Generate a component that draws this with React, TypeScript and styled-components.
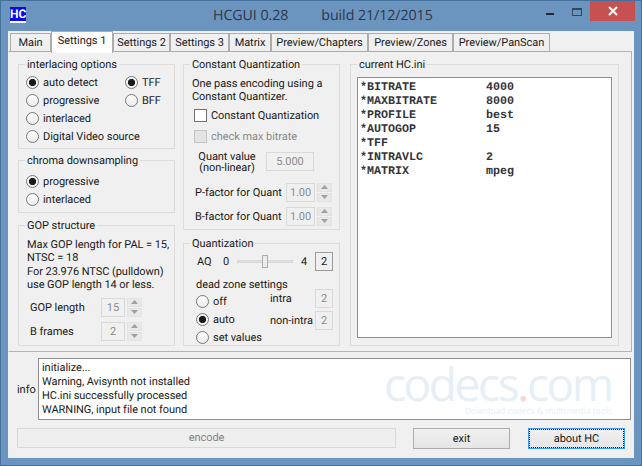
import React from 'react';
import styled, { createGlobalStyle } from 'styled-components';

const GlobalStyle = createGlobalStyle`
  html, body {
    margin: 0;
    padding: 0;
    background: #6b95bf;
  }
  * {
    box-sizing: border-box;
  }
`;

const tabs = [
  { label: 'Main', w: 41 },
  { label: 'Settings 1', w: 62, active: true },
  { label: 'Settings 2', w: 57 },
  { label: 'Settings 3', w: 59 },
  { label: 'Matrix', w: 42 },
  { label: 'Preview/Chapters', w: 97 },
  { label: 'Preview/Zones', w: 85 },
  { label: 'Preview/PanScan', w: 97 },
];

const iniLines = [
  ['*BITRATE', '4000'],
  ['*MAXBITRATE', '8000'],
  ['*PROFILE', 'best'],
  ['*AUTOGOP', '15'],
  ['*TFF', ''],
  ['*INTRAVLC', '2'],
  ['*MATRIX', 'mpeg'],
];

const logLines = [
  'initialize...',
  'Warning, Avisynth not installed',
  'HC.ini successfully processed',
  'WARNING, input file not found',
];

const Radio = ({ on, label }: { on?: boolean; label: string }) => (
  <RadioRow>
    <RadioDot $on={on} />
    {label}
  </RadioRow>
);

const Spinner = () => (
  <SpinBox>
    <SpinPart>
      <svg width="7" height="4" viewBox="0 0 7 4"><path d="M3.5 0L7 4H0z" fill="#a0a0a0" /></svg>
    </SpinPart>
    <SpinPart>
      <svg width="7" height="4" viewBox="0 0 7 4"><path d="M0 0h7L3.5 4z" fill="#a0a0a0" /></svg>
    </SpinPart>
  </SpinBox>
);

export default function App() {
  return (
    <Win>
      <GlobalStyle />
      <TitleBar>
        <AppIcon>HC</AppIcon>
        <Title>
          <span>HCGUI 0.28</span>
          <span>build 21/12/2015</span>
        </Title>
        <Controls>
          <MinBtn />
          <MaxBtn />
          <CloseBtn>
            <svg width="10" height="10" viewBox="0 0 10 10">
              <path d="M1 1l8 8M9 1l-8 8" stroke="#fff" strokeWidth="2" />
            </svg>
          </CloseBtn>
        </Controls>
      </TitleBar>
      <Client>
        <TabStrip>
          {tabs.map(t => (
            <Tab key={t.label} $w={t.w} $active={t.active}>{t.label}</Tab>
          ))}
        </TabStrip>
        <Panel>
          <Column>
            <Group $h={85}>
              <Legend>interlacing options</Legend>
              <RadioGrid>
                <Radio on label="auto detect" />
                <Radio on label="TFF" />
                <Radio label="progressive" />
                <Radio label="BFF" />
                <Radio label="interlaced" />
                <span />
                <Radio label="Digital Video source" />
              </RadioGrid>
            </Group>
            <Group $h={53} $mt={11}>
              <Legend>chroma downsampling</Legend>
              <RadioStack $top={11}>
                <Radio on label="progressive" />
                <Radio label="interlaced" />
              </RadioStack>
            </Group>
            <Group $h={121} $mt={12}>
              <Legend>GOP structure</Legend>
              <Para $top={12}>
                Max GOP length for PAL = 15,<br />
                NTSC = 18<br />
                For 23.976 NTSC (pulldown)<br />
                use GOP length 14 or less.
              </Para>
              <FieldRow $mt={6} $pl={11}>
                <FieldLabel $w={71}>GOP length</FieldLabel>
                <Field $w={24}>15</Field>
                <Spinner />
              </FieldRow>
              <FieldRow $mt={5} $pl={11}>
                <FieldLabel $w={71}>B frames</FieldLabel>
                <Field $w={24}>2</Field>
                <Spinner />
              </FieldRow>
            </Group>
          </Column>
          <Column>
            <Group $h={166}>
              <Legend>Constant Quantization</Legend>
              <Para $top={12}>
                One pass encoding using a<br />
                Constant Quantizer.
              </Para>
              <CheckRow $mt={2}>
                <CheckBox />
                Constant Quantization
              </CheckRow>
              <CheckRow $mt={1} $disabled>
                <CheckBox $disabled />
                check max bitrate
              </CheckRow>
              <FieldRow $mt={4} $pl={14}>
                <QuantLabel>Quant value<br />(non-linear)</QuantLabel>
                <Field $w={48}>5.000</Field>
              </FieldRow>
              <FieldRow $mt={10} $pl={11}>
                <FieldLabel $w={91}>P-factor for Quant</FieldLabel>
                <Field $w={29}>1.00</Field>
                <Spinner />
              </FieldRow>
              <FieldRow $mt={5} $pl={11}>
                <FieldLabel $w={91}>B-factor for Quant</FieldLabel>
                <Field $w={29}>1.00</Field>
                <Spinner />
              </FieldRow>
            </Group>
            <Group $h={103} $mt={13}>
              <Legend>Quantization</Legend>
              <AqRow>
                <AqLabel $w={26}>AQ</AqLabel>
                <AqLabel $w={14}>0</AqLabel>
                <Slider><SliderThumb /></Slider>
                <AqLabel $w={14}>4</AqLabel>
                <Field $w={18} $dark>2</Field>
              </AqRow>
              <DeadZone>
                <DeadRadios>
                  <DeadTitle>dead zone settings</DeadTitle>
                  <Radio label="off" />
                  <Radio on label="auto" />
                  <Radio label="set values" />
                </DeadRadios>
                <DeadValues>
                  <FieldRow>
                    <FieldLabel $w={45}>intra</FieldLabel>
                    <Field $w={18}>2</Field>
                  </FieldRow>
                  <FieldRow $mt={3}>
                    <FieldLabel $w={45}>non-intra</FieldLabel>
                    <Field $w={18}>2</Field>
                  </FieldRow>
                </DeadValues>
              </DeadZone>
            </Group>
          </Column>
          <IniGroup>
            <Legend>current HC.ini</Legend>
            <IniBox>
              {iniLines.map(([k, v]) => (
                <IniLine key={k}>
                  <IniKey>{k}</IniKey>
                  <span>{v}</span>
                </IniLine>
              ))}
            </IniBox>
          </IniGroup>
        </Panel>
        <Bottom>
          <InfoRow>
            <InfoLabel>info</InfoLabel>
            <LogBox>
              {logLines.map(l => <LogLine key={l}>{l}</LogLine>)}
              <Watermark>
                <WatermarkName>codecs<WatermarkDot>.</WatermarkDot>com</WatermarkName>
                <WatermarkTag>Download codecs &amp; multimedia tools</WatermarkTag>
              </Watermark>
            </LogBox>
          </InfoRow>
          <ButtonRow>
            <EncodeButton>encode</EncodeButton>
            <ExitButton>exit</ExitButton>
            <AboutButton><span>about HC</span></AboutButton>
          </ButtonRow>
        </Bottom>
      </Client>
    </Win>
  );
}

const Win = styled.div`
  width: 642px;
  height: 466px;
  padding: 0 7px 7px;
  background: #6b95bf;
  border: 1px solid #44709e;
  font-family: Roboto, "Liberation Sans", Arial, sans-serif;
  font-size: 11px;
  letter-spacing: -0.05px;
  text-rendering: geometricPrecision;
  color: #1a1a1a;
  overflow: hidden;
`;

const TitleBar = styled.div`
  height: 30px;
  display: flex;
  align-items: flex-start;
  position: relative;
`;

const AppIcon = styled.div`
  width: 16px;
  height: 16px;
  margin: 6px 0 0 2px;
  background: #0a0af0;
  border-bottom: 2px solid #fff;
  color: #fff;
  font-weight: 700;
  font-size: 12px;
  line-height: 14px;
  text-align: center;
`;

const Title = styled.div`
  margin: 6px 0 0 187px;
  display: flex;
  gap: 33px;
  font-family: "Open Sans", sans-serif;
  font-size: 14.2px;
  line-height: 18px;
  color: #2b3648;
`;

const Controls = styled.div`
  position: absolute;
  right: -1px;
  top: 0;
  display: flex;
  align-items: flex-start;
`;

const MinBtn = styled.div`
  width: 8px;
  height: 2px;
  margin: 12px 18px 0 0;
  background: #1f2a38;
`;

const MaxBtn = styled.div`
  width: 10px;
  height: 8px;
  margin: 7px 8px 0 0;
  border: 1px solid #33475f;
  border-top-width: 2px;
`;

const CloseBtn = styled.div`
  width: 45px;
  height: 20px;
  background: #c75050;
  display: flex;
  align-items: center;
  justify-content: center;
`;

const Client = styled.div`
  width: 626px;
  height: 427px;
  background: #f0f0f0;
  display: flex;
  flex-direction: column;
`;

const TabStrip = styled.div`
  height: 21px;
  display: flex;
  align-items: flex-end;
  padding-left: 2px;
  position: relative;
  z-index: 1;
  margin-bottom: -1px;
`;

const Tab = styled.div<{ $w: number; $active?: boolean }>`
  width: ${p => p.$w}px;
  height: ${p => (p.$active ? 22 : 19)}px;
  margin-bottom: ${p => (p.$active ? -1 : 0)}px;
  padding-top: 2px;
  background: ${p => (p.$active ? '#ffffff' : '#f0f0f0')};
  border: 1px solid #acacac;
  border-bottom: ${p => (p.$active ? 'none' : '1px solid #acacac')};
  text-align: center;
  line-height: 14px;
  white-space: nowrap;
`;

const Panel = styled.div`
  width: 624px;
  height: 301px;
  border: 1px solid #b4b4b4;
  border-left-color: #f0f0f0;
  padding: 12px 9px 0;
  display: flex;
  gap: 8px;
`;

const Column = styled.div`
  width: 157px;
  display: flex;
  flex-direction: column;
`;

const Group = styled.div<{ $h: number; $mt?: number }>`
  position: relative;
  height: ${p => p.$h}px;
  margin-top: ${p => p.$mt ?? 0}px;
  border: 1px solid #dcdcdc;
`;

const Legend = styled.div`
  position: absolute;
  top: -7px;
  left: 6px;
  padding: 0 2px;
  background: #f0f0f0;
  line-height: 13px;
  white-space: nowrap;
`;

const RadioGrid = styled.div`
  display: grid;
  grid-template-columns: 99px 1fr;
  grid-auto-rows: 18px;
  padding: 8px 0 0 7px;
`;

const RadioStack = styled.div<{ $top: number }>`
  display: flex;
  flex-direction: column;
  padding: ${p => p.$top}px 0 0 7px;
`;

const RadioRow = styled.div`
  height: 18px;
  display: flex;
  align-items: center;
  gap: 4px;
  white-space: nowrap;
`;

const RadioDot = styled.span<{ $on?: boolean }>`
  width: 13px;
  height: 13px;
  flex: none;
  border-radius: 50%;
  border: 1px solid #777;
  background: ${p =>
    p.$on
      ? 'radial-gradient(circle, #1a1a1a 0, #1a1a1a 3.2px, #f4f4f4 4px)'
      : 'linear-gradient(#fdfdfd, #ececec)'};
`;

const Para = styled.div<{ $top: number }>`
  padding: ${p => p.$top}px 0 0 8px;
  line-height: 13.4px;
  white-space: nowrap;
`;

const FieldRow = styled.div<{ $mt?: number; $pl?: number }>`
  display: flex;
  align-items: center;
  margin-top: ${p => p.$mt ?? 0}px;
  padding-left: ${p => p.$pl ?? 0}px;
  white-space: nowrap;
`;

const FieldLabel = styled.div<{ $w: number }>`
  width: ${p => p.$w}px;
  flex: none;
`;

const QuantLabel = styled.div`
  width: 58px;
  margin-right: 10px;
  text-align: center;
  line-height: 11px;
`;

const Field = styled.div<{ $w: number; $dark?: boolean }>`
  width: ${p => p.$w}px;
  height: 19px;
  flex: none;
  border: 1px solid ${p => (p.$dark ? '#9a9a9a' : '#d9d9d9')};
  background: #f0f0f0;
  color: ${p => (p.$dark ? '#1a1a1a' : '#8a8a8a')};
  text-align: center;
  line-height: 17px;
`;

const SpinBox = styled.div`
  width: 15px;
  height: 19px;
  margin-left: 2px;
  display: flex;
  flex-direction: column;
  gap: 1px;
`;

const SpinPart = styled.div`
  flex: 1;
  background: #e8e8e8;
  border: 1px solid #e2e2e2;
  display: flex;
  align-items: center;
  justify-content: center;
`;

const CheckRow = styled.div<{ $mt: number; $disabled?: boolean }>`
  height: 20px;
  margin-top: ${p => p.$mt}px;
  padding-left: 10px;
  display: flex;
  align-items: center;
  gap: 4px;
  color: ${p => (p.$disabled ? '#8a8a8a' : 'inherit')};
  white-space: nowrap;
`;

const CheckBox = styled.span<{ $disabled?: boolean }>`
  width: 13px;
  height: 13px;
  flex: none;
  border: 1px solid ${p => (p.$disabled ? '#c4c4c4' : '#707070')};
  background: ${p => (p.$disabled ? '#e4e4e4' : '#ffffff')};
`;

const AqRow = styled.div`
  display: flex;
  align-items: center;
  padding: 7px 0 0 13px;
  height: 27px;
`;

const AqLabel = styled.div<{ $w: number }>`
  width: ${p => p.$w}px;
  flex: none;
`;

const Slider = styled.div`
  position: relative;
  width: 56px;
  height: 3px;
  margin-right: 8px;
  background: #e3e3e3;
  border: 1px solid #d6d6d6;
`;

const SliderThumb = styled.div`
  position: absolute;
  left: 24px;
  top: -6px;
  width: 6px;
  height: 13px;
  background: #ececec;
  border: 1px solid #acacac;
`;

const DeadZone = styled.div`
  display: flex;
  padding-left: 12px;
  margin-top: 8px;
`;

const DeadRadios = styled.div`
  width: 74px;
`;

const DeadTitle = styled.div`
  height: 13px;
  line-height: 11px;
  white-space: nowrap;
`;

const DeadValues = styled.div`
  margin-top: 10px;
`;

const IniGroup = styled.div`
  position: relative;
  width: 269px;
  height: 282px;
  margin-left: 2px;
  border: 1px solid #dcdcdc;
  padding: 12px 6px 6px;
`;

const IniBox = styled.div`
  height: 261px;
  width: 255px;
  background: #fff;
  border: 1px solid #8f8f8f;
  padding: 2px 2px;
  font-family: "Liberation Mono", monospace;
  font-size: 11.67px;
  font-weight: 700;
  letter-spacing: 0;
  line-height: 14px;
  color: #33333b;
`;

const IniLine = styled.div`
  display: flex;
  height: 14px;
`;

const IniKey = styled.span`
  width: 126px;
  flex: none;
`;

const Bottom = styled.div`
  flex: 1;
  padding-left: 9px;
`;

const InfoRow = styled.div`
  display: flex;
  align-items: center;
  margin-top: 6px;
`;

const InfoLabel = styled.div`
  width: 21px;
`;

const LogBox = styled.div`
  position: relative;
  width: 593px;
  height: 62px;
  padding: 2px 3px;
  background: #fff;
  border: 1px solid #8f8f8f;
`;

const LogLine = styled.div`
  height: 14px;
  line-height: 14px;
`;

const Watermark = styled.div`
  position: absolute;
  right: 18px;
  top: 2px;
  text-align: right;
  font-family: "Open Sans", sans-serif;
  color: #e6eff5;
`;

const WatermarkName = styled.div`
  font-size: 46px;
  line-height: 46px;
  letter-spacing: -2.4px;
`;

const WatermarkDot = styled.span`
  color: #f8d4d4;
`;

const WatermarkTag = styled.div`
  font-size: 8.6px;
  line-height: 9px;
  white-space: nowrap;
`;

const ButtonRow = styled.div`
  display: flex;
  margin-top: 8px;
`;

const EncodeButton = styled.div`
  width: 379px;
  height: 20px;
  border: 1px solid #d9d9d9;
  background: #efefef;
  color: #838383;
  text-align: center;
  line-height: 18px;
`;

const ExitButton = styled.div`
  width: 97px;
  height: 21px;
  margin-left: 17px;
  border: 1px solid #acacac;
  background: linear-gradient(#f0f0f0, #e5e5e5);
  text-align: center;
  line-height: 19px;
`;

const AboutButton = styled.div`
  width: 97px;
  height: 21px;
  margin-left: 18px;
  border: 1px solid #3399ff;
  background: linear-gradient(#f0f0f0, #e5e5e5);
  text-align: center;
  line-height: 17px;
  padding: 1px;
  & > span {
    display: block;
    height: 17px;
    outline: 1px dotted #111;
  }
`;
